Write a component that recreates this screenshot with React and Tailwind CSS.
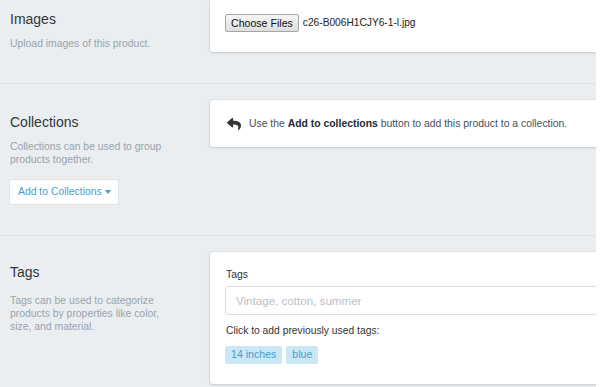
import { FaReply } from "react-icons/fa";

const sans = { fontFamily: '"Liberation Sans", Arial, sans-serif' };

function Annotation({ title, children, className, descClass = "mt-[9px]" }) {
  return (
    <div className={"w-[210px] shrink-0 pl-[10px] " + className}>
      <h2 className="text-[14px] leading-[17px] text-[#31373d]">{title}</h2>
      <p className={"w-[172px] text-[10.4px] leading-[13px] text-[#98a3ad] " + descClass}>{children}</p>
    </div>
  );
}

function Card({ className, children }) {
  return (
    <div
      className={
        "w-[420px] shrink-0 rounded-[3px] bg-white shadow-[0_0_0_1px_rgba(63,63,68,0.05),0_1px_3px_0_rgba(63,63,68,0.15)] " +
        className
      }
    >
      {children}
    </div>
  );
}

export default function App() {
  return (
    <div className="h-[387px] w-[600px] bg-white" style={sans}>
      <div className="h-[387px] w-[596px] overflow-hidden bg-[#ebeef0]">
        {/* Images */}
        <div className="flex h-[84px] border-b border-[#dfe3e7]">
          <Annotation title="Images" className="pt-[11px]">
            Upload images of this product.
          </Annotation>
          <Card className="h-[52px] rounded-t-none pl-[15px] pt-[14px]">
            <div className="flex items-center gap-[4px]">
              <button className="h-[18px] rounded-[2px] border border-[#a6a6a6] bg-gradient-to-b from-[#f6f6f6] to-[#dedede] px-[5px] text-[10.6px] leading-[16px] text-[#111]">
                Choose Files
              </button>
              <span className="text-[10.2px] text-[#222]">c26-B006H1CJY6-1-l.jpg</span>
            </div>
          </Card>
        </div>

        {/* Collections */}
        <div className="flex h-[152px] border-b border-[#dfe3e7] pt-[16px]">
          <div className="w-[210px] shrink-0 pl-[10px] pt-[14px]">
            <h2 className="text-[14px] leading-[17px] text-[#31373d]">Collections</h2>
            <p className="mt-[9px] w-[152px] text-[10.4px] leading-[13.3px] text-[#98a3ad]">
              Collections can be used to group products together.
            </p>
            <button className="mt-[13px] flex h-[24px] items-center rounded-[2px] bg-white pl-[8px] pr-[7px] text-[10.4px] text-[#479ccf] shadow-[0_0_0_1px_rgba(63,63,68,0.06)]">
              Add to Collections
              <span className="ml-[3px] mt-[1px] h-0 w-0 border-x-[3px] border-t-[4px] border-x-transparent border-t-[#479ccf]" />
            </button>
          </div>
          <Card className="h-[47px] self-start pl-[16px] pt-[16px]">
            <div className="flex items-center text-[10.4px] leading-[15px] text-[#454f5b]">
              <FaReply className="mr-[7px] h-[14px] w-[16px] text-[#333]" />
              <span>
                Use the <b className="text-[#212b36]">Add to collections</b> button to add this product to a collection.
              </span>
            </div>
          </Card>
        </div>

        {/* Tags */}
        <div className="flex h-[152px] pt-[16px]">
          <Annotation title="Tags" className="pt-[12px]" descClass="mt-[13px]">
            Tags can be used to categorize products by properties like color, size, and material.
          </Annotation>
          <Card className="h-[132px] self-start pl-[15px] pt-[16px]">
            <label className="block pl-[1px] text-[10.4px] leading-[14px] text-[#333]">Tags</label>
            <input
              placeholder="Vintage, cotton, summer"
              className="mt-[4px] block h-[29px] w-[400px] rounded-[3px] border border-[#d9dde1] px-[10px] text-[11.6px] text-[#333] outline-none placeholder:text-[#b9c0c6]"
            />
            <p className="mt-[9px] pl-[1px] text-[10.3px] leading-[14px] text-[#333]">
              Click to add previously used tags:
            </p>
            <div className="mt-[8px] flex gap-[4px]">
              <span className="flex h-[18px] items-center rounded-[2px] bg-[#c9e7f5] px-[6px] text-[10.6px] text-[#4a9dcf]">
                14 inches
              </span>
              <span className="flex h-[18px] items-center rounded-[2px] bg-[#c9e7f5] px-[6px] text-[10.6px] text-[#4a9dcf]">
                blue
              </span>
            </div>
          </Card>
        </div>
      </div>
    </div>
  );
}
